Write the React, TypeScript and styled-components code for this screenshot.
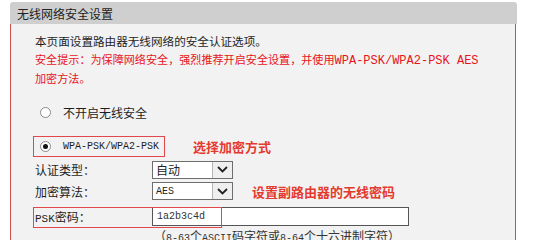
import React from "react";
import styled, { createGlobalStyle } from "styled-components";

const Global = createGlobalStyle`
  html, body { margin: 0; padding: 0; background: #ffffff; overflow: hidden; }
  body {
    font-family: "Noto Sans CJK SC", "Noto Sans", sans-serif;
    font-size: 12px;
    color: #1e1e1e;
  }
`;

const Panel = styled.div`
  margin: 2px 0 0 10px;
  width: 507px;
`;

const Header = styled.div`
  height: 22px;
  background: #cfcfcf;
  border-radius: 3px 3px 0 0;
  padding-left: 7px;
  display: flex;
  align-items: center;
  font-size: 12px;
  color: #222;
`;

const Body = styled.div`
  background: #f2f2f2;
  border-left: 1px solid #d05050;
  border-right: 1px solid #d05050;
  margin-right: 1px;
  padding: 9px 0 0 24px;
  height: 216px;
  overflow: hidden;
  box-sizing: border-box;
`;

const Notice = styled.div`
  line-height: 17.5px;
`;

const Intro = styled.div`
  font-size: 11.6px;
`;

const Warn = styled.div`
  color: #e8141b;
  font-size: 11.1px;
`;

const Mono = styled.span<{ $size?: number }>`
  font-family: "Liberation Mono", "DejaVu Sans Mono", monospace;
  font-size: ${(p) => p.$size ?? 10}px;
`;

const RadioGroup = styled.div`
  display: flex;
  flex-direction: column;
  gap: 13px;
  margin: 14px 0 0 -2px;
  align-items: flex-start;
`;

const RadioRow = styled.div<{ $marked?: boolean }>`
  display: flex;
  align-items: center;
  gap: 12px;
  height: 19px;
  padding: 0 5px 0 6px;
  border: 1px solid ${(p) => (p.$marked ? "#e0484c" : "transparent")};
`;

const RadioDot = styled.span<{ $checked?: boolean }>`
  width: 11px;
  height: 11px;
  border-radius: 50%;
  border: 1px solid #8a8a8a;
  background: #ffffff;
  box-sizing: border-box;
  display: flex;
  align-items: center;
  justify-content: center;
  &::after {
    content: "";
    width: 5px;
    height: 5px;
    border-radius: 50%;
    background: ${(p) => (p.$checked ? "#111" : "transparent")};
  }
`;

const RadioLine = styled.div`
  display: flex;
  align-items: center;
  gap: 28px;
`;

const Callout = styled.span`
  color: #e43a2f;
  font-weight: bold;
  font-size: 13px;
`;

const Form = styled.div`
  display: flex;
  flex-direction: column;
  margin-top: 4px;
`;

const Row = styled.div<{ $gap?: number }>`
  position: relative;
  display: grid;
  grid-template-columns: 98px auto auto;
  justify-content: start;
  align-items: center;
  column-gap: 19px;
  margin-top: ${(p) => p.$gap ?? 0}px;
`;

const Label = styled.span`
  font-size: 12px;
`;

const Select = styled.div`
  width: 81px;
  height: 18px;
  box-sizing: border-box;
  border: 1px solid #6e6e6e;
  background: #ffffff;
  display: flex;
  align-items: stretch;
`;

const SelectValue = styled.span`
  flex: 1;
  display: flex;
  align-items: center;
  padding-left: 3px;
  font-size: 12px;
  color: #222;
`;

const SelectButton = styled.span`
  width: 19px;
  border-left: 1px solid #b5b5b5;
  background: #efefef;
  display: flex;
  align-items: center;
  justify-content: center;
`;

const TextInput = styled.div`
  width: 257px;
  height: 19px;
  box-sizing: border-box;
  border: 1px solid #555555;
  background: #ffffff;
  display: flex;
  align-items: center;
  padding-left: 4px;
  color: #333;
`;

const Mark = styled.div`
  position: absolute;
  left: -2px;
  top: 0;
  width: 189px;
  height: 21px;
  box-sizing: border-box;
  border: 1px solid #e0484c;
  pointer-events: none;
`;

const Hint = styled.div`
  margin: 1px 0 0 119px;
  font-size: 12px;
  color: #333;
`;

const Chevron = () => (
  <svg width="11" height="7" viewBox="0 0 11 7">
    <path d="M1 1 L5.5 5.5 L10 1" fill="none" stroke="#222" strokeWidth="1.8" />
  </svg>
);

export default function App() {
  return (
    <>
      <Global />
      <Panel>
        <Header>无线网络安全设置</Header>
        <Body>
          <Notice>
            <Intro>本页面设置路由器无线网络的安全认证选项。</Intro>
            <Warn>
              安全提示：为保障网络安全，强烈推荐开启安全设置，并使用
              <Mono $size={12}>WPA-PSK/WPA2-PSK AES</Mono>
              <br />
              加密方法。
            </Warn>
          </Notice>
          <RadioGroup>
            <RadioRow>
              <RadioDot />
              <span>不开启无线安全</span>
            </RadioRow>
            <RadioLine>
              <RadioRow $marked>
                <RadioDot $checked />
                <Mono>WPA-PSK/WPA2-PSK</Mono>
              </RadioRow>
              <Callout>选择加密方式</Callout>
            </RadioLine>
          </RadioGroup>
          <Form>
            <Row>
              <Label>认证类型：</Label>
              <Select>
                <SelectValue>自动</SelectValue>
                <SelectButton>
                  <Chevron />
                </SelectButton>
              </Select>
            </Row>
            <Row $gap={3}>
              <Label>加密算法：</Label>
              <Select>
                <SelectValue>
                  <Mono>AES</Mono>
                </SelectValue>
                <SelectButton>
                  <Chevron />
                </SelectButton>
              </Select>
              <Callout>设置副路由器的无线密码</Callout>
            </Row>
            <Row $gap={6}>
              <Label>
                <Mono $size={11}>PSK</Mono>密码：
              </Label>
              <TextInput>
                <Mono>1a2b3c4d</Mono>
              </TextInput>
              <Mark />
            </Row>
            <Hint>
              （<Mono>8-63</Mono>个<Mono>ASCII</Mono>码字符或<Mono>8-64</Mono>个十六进制字符）
            </Hint>
          </Form>
        </Body>
      </Panel>
    </>
  );
}
